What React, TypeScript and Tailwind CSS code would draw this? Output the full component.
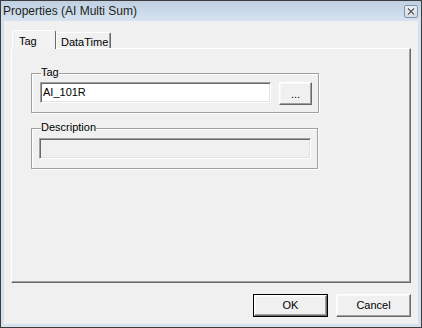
const raised =
  "border border-t-white border-l-white border-r-[#696969] border-b-[#696969] shadow-[inset_-1px_-1px_0_#a0a0a0,inset_1px_1px_0_#f8f8f8]";
const sunken =
  "border border-t-[#a0a0a0] border-l-[#a0a0a0] border-r-white border-b-white shadow-[inset_1px_1px_0_#696969,inset_-1px_-1px_0_#e3e3e3]";
const etched =
  "relative border border-[#a0a0a0] shadow-[1px_1px_0_#ffffff,inset_1px_1px_0_#ffffff]";

function CloseButton() {
  return (
    <div className="w-[14px] h-[13px] rounded-[2px] border border-[#8494a8] bg-gradient-to-b from-[#e6edf4] to-[#d2dde9] flex items-center justify-center">
      <svg width="10" height="9" viewBox="0 0 10 9">
        <path d="M2 1.5 L8 7.5 M8 1.5 L2 7.5" stroke="#ffffff" strokeWidth="3" />
        <path d="M2 1.5 L8 7.5 M8 1.5 L2 7.5" stroke="#555555" strokeWidth="1.4" />
      </svg>
    </div>
  );
}

function GroupBox({
  label,
  className,
  children,
}: {
  label: string;
  className: string;
  children: React.ReactNode;
}) {
  return (
    <div className={`${etched} ${className}`}>
      <span className="absolute -top-[8px] left-[9px] bg-[#f0f0f0] leading-[13px]">{label}</span>
      {children}
    </div>
  );
}

export default function App() {
  return (
    <div className="w-[422px] h-[328px] flex flex-col border border-[#3c3c3c] bg-[#d5e1ed] text-[11px] text-black font-['Liberation_Sans',Arial,sans-serif]">
      {/* title bar */}
      <div className="h-[20px] shrink-0 flex items-center justify-between pl-[2px] pr-[3px] bg-gradient-to-b from-[#bfd0e2] to-[#d7e3ef]">
        <span className="text-[12px] text-[#1e1e1e]">Properties (AI Multi Sum)</span>
        <CloseButton />
      </div>

      {/* client */}
      <div className="flex-1 mx-[3px] mb-[3px] bg-[#f0f0f0] flex flex-col px-[7px] pt-[9px]">
        {/* tabs */}
        <div className="h-[18px] flex items-end pl-[1px]">
          <div className="relative z-10 -mb-px h-[19px] w-[44px] pl-[6px] pt-[2px] bg-[#f2f2f2] border-t border-l border-white border-r border-r-[#696969] rounded-t-[2px]">
            Tag
          </div>
          <div className="h-[16px] w-[55px] px-[4px] pt-[1px] border-t border-l border-white border-r border-r-[#696969] shadow-[inset_-1px_0_0_#a0a0a0] rounded-t-[2px]">
            DataTime
          </div>
        </div>

        {/* tab panel */}
        <div className="h-[235px] border border-t-white border-l-white border-r-[#696969] border-b-[#696969] shadow-[inset_-1px_-1px_0_#a0a0a0] pl-[19px] pt-[24px]">
          <GroupBox label="Tag" className="w-[288px] h-[40px] pl-[8px] pt-[8px] flex items-start">
            <div className={`w-[231px] h-[21px] bg-white ${sunken} pl-[2px] leading-[19px]`}>AI_101R</div>
            <button className={`ml-[8px] w-[33px] h-[23px] bg-[#f0f0f0] ${raised} leading-[19px] pt-[2px]`}>
              ...
            </button>
          </GroupBox>

          <GroupBox label="Description" className="mt-[15px] w-[287px] h-[41px] pl-[7px] pt-[9px]">
            <div className={`w-[272px] h-[21px] bg-[#f0f0f0] ${sunken}`} />
          </GroupBox>
        </div>

        {/* buttons */}
        <div className="mt-[11px] flex justify-end gap-[8px]">
          <button className="w-[75px] h-[23px] border border-black bg-[#f0f0f0]">
            <div className={`h-full ${raised} flex items-center justify-center`}>OK</div>
          </button>
          <button className={`w-[75px] h-[23px] bg-[#f0f0f0] ${raised} flex items-center justify-center`}>
            Cancel
          </button>
        </div>
      </div>
    </div>
  );
}
